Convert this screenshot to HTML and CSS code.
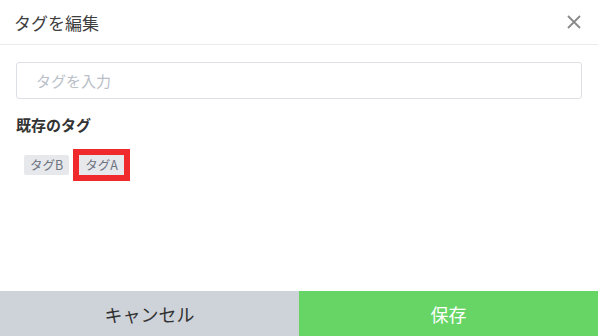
FILE: index.html
```html
<!DOCTYPE html>
<html lang="ja">
<head>
    <meta charset="UTF-8">
    <meta name="viewport" content="width=device-width, initial-scale=1.0">
    <title>タグを編集</title>
    <link rel="stylesheet" href="styles.css">
</head>
<body>

    <div class="modal">
        <header class="modal-header">
            <h1>タグを編集</h1>
            <button class="close-btn" aria-label="閉じる">
                <svg width="14" height="14" viewBox="0 0 14 14">
                    <path d="M1 1 L13 13 M13 1 L1 13" stroke="#8a8a8a" stroke-width="1.8" fill="none"/>
                </svg>
            </button>
        </header>

        <section class="modal-body">
            <input type="text" class="tag-input" placeholder="タグを入力">

            <h2>既存のタグ</h2>
            <div class="tag-list">
                <span class="tag">タグB</span>
                <span class="tag selected">タグA</span>
            </div>
        </section>

        <footer class="modal-footer">
            <button class="cancel-btn">キャンセル</button>
            <button class="save-btn">保存</button>
        </footer>
    </div>

</body>
</html>
```

FILE: styles.css
```css
body {
    font-family: "Noto Sans CJK JP", "Noto Sans", sans-serif;
    margin: 0;
    padding: 0;
    background-color: #fff;
    color: #333;
}

.modal {
    display: flex;
    flex-direction: column;
    width: 598px;
    height: 336px;
}

.modal-header {
    display: flex;
    align-items: center;
    justify-content: space-between;
    height: 44px;
    padding: 0 17px 0 14px;
    border-bottom: 1px solid #ebebeb;
}

.modal-header h1 {
    margin: 0;
    font-size: 17px;
    font-weight: normal;
    color: #3f3f3f;
}

.close-btn {
    background: none;
    border: none;
    padding: 0;
    width: 14px;
    height: 14px;
    cursor: pointer;
}

.close-btn svg {
    display: block;
}

.modal-body {
    flex: 1;
    padding: 17px 16px 0;
}

.tag-input {
    display: block;
    box-sizing: border-box;
    width: 100%;
    height: 37px;
    padding: 0 19px;
    border: 1px solid #dcdfe4;
    border-radius: 3px;
    font-family: inherit;
    font-size: 15px;
    color: #333;
    outline: none;
}

.tag-input::placeholder {
    color: #b9bec7;
}

.modal-body h2 {
    margin: 16px 0 0;
    font-size: 15px;
    font-weight: bold;
    line-height: 20px;
    color: #333;
}

.tag-list {
    display: flex;
    margin-top: 20px;
    padding-left: 8px;
}

.tag {
    height: 20px;
    padding: 0 6px;
    line-height: 20px;
    font-size: 12.5px;
    color: #6e7480;
    background-color: #e6e8ec;
    border-radius: 2px;
}

.tag + .tag {
    margin-left: 10px;
}

/* highlighted tag */
.tag.selected {
    border-radius: 0;
    outline: 6px solid #f0292d;
}

.modal-footer {
    display: flex;
    height: 45px;
}

.modal-footer button {
    flex: 1;
    border: none;
    font-family: inherit;
    font-size: 18px;
    cursor: pointer;
}

.cancel-btn {
    background-color: #ced2d9;
    color: #333;
}

.save-btn {
    background-color: #66d566;
    color: #fff;
}
```
